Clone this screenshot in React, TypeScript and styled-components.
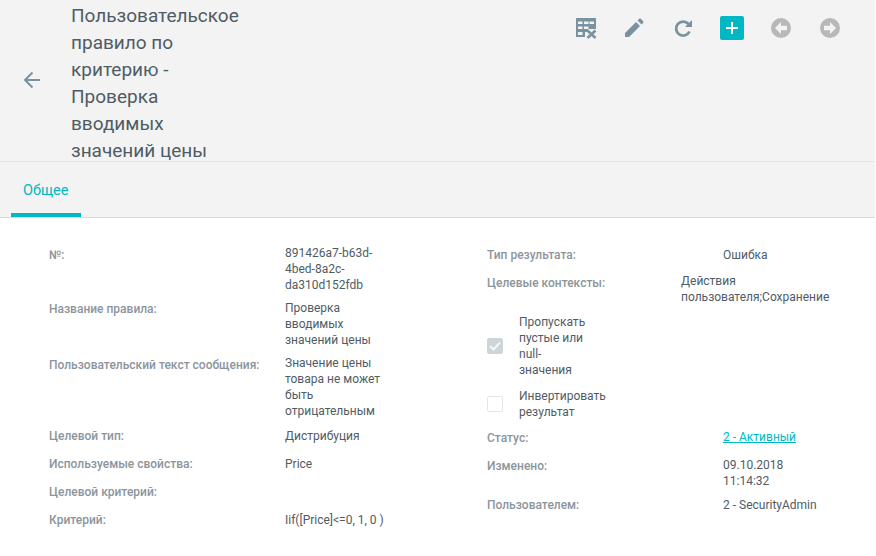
import React from 'react'
import styled, { createGlobalStyle } from 'styled-components'

const GlobalStyle = createGlobalStyle`
    html, body {
        margin: 0;
        padding: 0;
        background: #fff;
    }
    body {
        font-family: Roboto, "Open Sans", sans-serif;
        font-size: 12px;
        line-height: 16px;
        color: #4f5c65;
    }
`

const Page = styled.div`
    width: 875px;
    height: 556px;
    overflow: hidden;
    display: flex;
    flex-direction: column;
`

const Header = styled.header`
    height: 161px;
    flex: none;
    display: flex;
    background: #f3f3f3;
    border-bottom: 1px solid #e4e6e7;
`

const BackButton = styled.div`
    width: 71px;
    flex: none;
    padding: 71px 0 0 23px;
    box-sizing: border-box;
    color: #7a929f;
`

const Title = styled.h1`
    margin: 2px 0 0;
    width: 180px;
    flex: none;
    font-size: 19px;
    font-weight: 400;
    line-height: 27px;
    color: #4f5c65;
    white-space: pre-line;
`

const Toolbar = styled.div`
    margin-left: auto;
    display: flex;
    align-items: center;
    align-self: flex-start;
    gap: 25px;
    padding: 16px 33px 0 0;
`

const ToolIcon = styled.svg`
    display: block;
    width: 24px;
    height: 24px;
`

const AddButton = styled.div`
    width: 24px;
    height: 24px;
    border-radius: 2px;
    background: #00b7c3;
    display: flex;
    align-items: center;
    justify-content: center;
`

const Tabs = styled.nav`
    height: 55px;
    flex: none;
    display: flex;
    padding-left: 11px;
    background: #f3f3f3;
    border-bottom: 1px solid #d5dadc;
`

const Tab = styled.div`
    width: 70px;
    box-sizing: border-box;
    padding: 20px 0 0 12px;
    font-size: 14.5px;
    line-height: 18px;
    color: #00b7c3;
    border-bottom: 4px solid #00b7c3;
`

const Form = styled.main`
    display: grid;
    grid-template-columns: 438px 1fr;
    padding: 27px 0 0 49px;
`

const Column = styled.section`
    display: flex;
    flex-direction: column;
`

const Row = styled.div<{ $gap?: number; $labelWidth?: number; $top?: number }>`
    display: grid;
    grid-template-columns: ${(p) => p.$labelWidth ?? 236}px 1fr;
    min-height: 21px;
    margin-top: ${(p) => p.$top ?? 0}px;
    margin-bottom: ${(p) => p.$gap ?? 7}px;
`

const Label = styled.div<{ $offset?: number }>`
    padding-top: ${(p) => p.$offset ?? 0}px;
    font-weight: 500;
    color: #8c959c;
`

const Value = styled.div<{ $width?: number }>`
    width: ${(p) => p.$width ?? 100}px;
`

const StatusLink = styled.a`
    color: #00b7c3;
    text-decoration: underline;
`

const CheckRow = styled.div<{ $gap?: number }>`
    display: flex;
    align-items: center;
    gap: 16px;
    margin-bottom: ${(p) => p.$gap ?? 10}px;
`

const CheckBox = styled.div<{ $checked?: boolean }>`
    width: 16px;
    height: 16px;
    flex: none;
    box-sizing: border-box;
    border-radius: 2px;
    display: flex;
    align-items: center;
    justify-content: center;
    background: ${(p) => (p.$checked ? '#ced5d9' : '#fff')};
    border: 1px solid ${(p) => (p.$checked ? '#ced5d9' : '#e4e7e9')};
`

const CheckText = styled.div`
    width: 72px;
`

const BackArrow = () => (
    <svg width="18" height="18" viewBox="0 0 18 18" fill="none" stroke="currentColor" strokeWidth="2">
        <path d="M17 9H2.5M9.5 1.5L2 9l7.5 7.5" />
    </svg>
)

const TableRemoveIcon = () => (
    <ToolIcon viewBox="0 0 24 24">
        <path
            fill="#7a929f"
            fillRule="evenodd"
            d="M3 2h20v11h-8v3h-3v5H3V2zm2 3.500v2.500h4.500V5.500H5zm6 0v2.500h4.500V5.500H11zm5.500 0v2.500H21V5.500h-4.500zM5 10.500V13h4.500v-2.500H5zm6 0V13h4.500v-2.500H11zM5 16v3h4.500v-3H5z"
        />
        <path stroke="#7a929f" strokeWidth="2.600" d="M14.500 14.500l8 7.500M22.500 14.500l-8 7.500" />
    </ToolIcon>
)

const PencilIcon = () => (
    <ToolIcon viewBox="0 0 24 24">
        <path fill="#7a929f" d="M3 17L14 6l4 4L7 21H3v-4zM15.500 4.500L17 3c.6-.6 1.300-.6 1.900 0l2.100 2.100c.6.6.6 1.300 0 1.900l-1.500 1.500-4-4z" />
    </ToolIcon>
)

const RefreshIcon = () => (
    <ToolIcon viewBox="0 0 24 24" fill="none">
        <path stroke="#7a929f" strokeWidth="2.800" d="M18.500 15.500a7 7 0 1 1-1-7.500" />
        <path fill="#7a929f" d="M21 4v7h-7z" />
    </ToolIcon>
)

const PlusIcon = () => (
    <svg width="12" height="12" viewBox="0 0 12 12">
        <path stroke="#fff" strokeWidth="2" d="M6 0v12M0 6h12" />
    </svg>
)

const CircleArrow = ({ flip }: { flip?: boolean }) => (
    <ToolIcon viewBox="0 0 24 24">
        <g transform={flip ? 'rotate(180 12 12)' : undefined}>
            <circle cx="12" cy="12" r="10" fill="#b8b8b8" />
            <path fill="#f3f3f3" d="M6 12l6-6v3.800h6v4.400h-6V18z" />
        </g>
    </ToolIcon>
)

const CheckMark = () => (
    <svg width="12" height="10" viewBox="0 0 12 10" fill="none">
        <path stroke="#f3f5f6" strokeWidth="2.200" d="M1 5l3.500 3.500L11 1.500" />
    </svg>
)

export default function App() {
    return (
        <Page>
            <GlobalStyle />
            <Header>
                <BackButton>
                    <BackArrow />
                </BackButton>
                <Title>{'Пользовательское\nправило по\nкритерию -\nПроверка\nвводимых\nзначений цены'}</Title>
                <Toolbar>
                    <TableRemoveIcon />
                    <PencilIcon />
                    <RefreshIcon />
                    <AddButton>
                        <PlusIcon />
                    </AddButton>
                    <CircleArrow />
                    <CircleArrow flip />
                </Toolbar>
            </Header>
            <Tabs>
                <Tab>Общее</Tab>
            </Tabs>
            <Form>
                <Column>
                    <Row>
                        <Label $offset={2}>№:</Label>
                        <Value>891426a7-b63d-4bed-8a2c-da310d152fdb</Value>
                    </Row>
                    <Row>
                        <Label $offset={1}>Название правила:</Label>
                        <Value>Проверка вводимых значений цены</Value>
                    </Row>
                    <Row $gap={9}>
                        <Label $offset={2}>Пользовательский текст сообщения:</Label>
                        <Value>Значение цены товара не может быть отрицательным</Value>
                    </Row>
                    <Row>
                        <Label>Целевой тип:</Label>
                        <Value>Дистрибуция</Value>
                    </Row>
                    <Row>
                        <Label>Используемые свойства:</Label>
                        <Value>Price</Value>
                    </Row>
                    <Row>
                        <Label>Целевой критерий:</Label>
                        <Value />
                    </Row>
                    <Row>
                        <Label>Критерий:</Label>
                        <Value $width={120}>Iif([Price]&lt;=0, 1, 0 )</Value>
                    </Row>
                </Column>
                <Column>
                    <Row $top={2} $gap={5}>
                        <Label>Тип результата:</Label>
                        <Value>Ошибка</Value>
                    </Row>
                    <Row $labelWidth={194} $gap={9}>
                        <Label $offset={2}>Целевые контексты:</Label>
                        <Value $width={160}>Действия пользователя;Сохранение</Value>
                    </Row>
                    <CheckRow>
                        <CheckBox $checked>
                            <CheckMark />
                        </CheckBox>
                        <CheckText>Пропускать пустые или null-значения</CheckText>
                    </CheckRow>
                    <CheckRow $gap={9}>
                        <CheckBox />
                        <CheckText>Инвертировать результат</CheckText>
                    </CheckRow>
                    <Row>
                        <Label $offset={1}>Статус:</Label>
                        <Value>
                            <StatusLink>2 - Активный</StatusLink>
                        </Value>
                    </Row>
                    <Row $gap={8}>
                        <Label $offset={1}>Изменено:</Label>
                        <Value $width={70}>09.10.2018 11:14:32</Value>
                    </Row>
                    <Row>
                        <Label>Пользователем:</Label>
                        <Value $width={120}>2 - SecurityAdmin</Value>
                    </Row>
                </Column>
            </Form>
        </Page>
    )
}
